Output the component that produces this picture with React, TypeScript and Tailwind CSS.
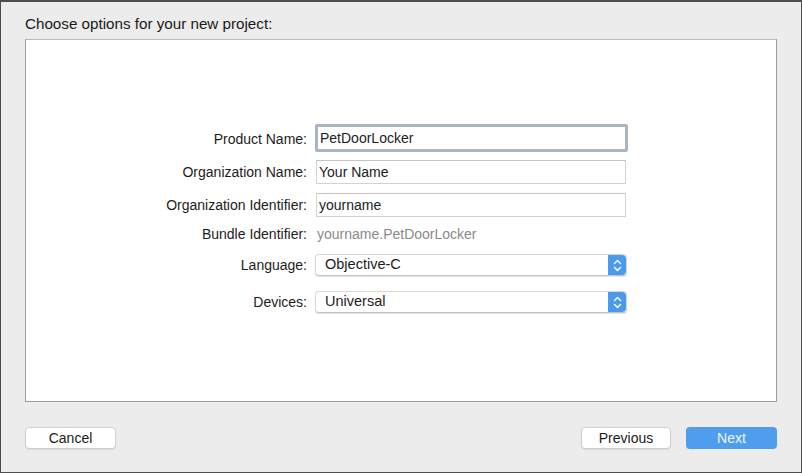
import React from 'react';

const font = { fontFamily: '"Liberation Sans", Arial, sans-serif' };

function Label({ children }: { children: React.ReactNode }) {
  return <div className="text-right text-[14px] leading-[16px] text-[#1c1c1c]">{children}</div>;
}

function Stepper() {
  return (
    <div className="flex h-full w-[18px] flex-col items-center justify-center gap-[1px] rounded-r-[4px] bg-[#4c9bea]">
      <svg width="9" height="6" viewBox="0 0 9 6" fill="none">
        <path d="M1.5 4.5 L4.5 1.5 L7.5 4.5" stroke="#fff" strokeWidth="1.4" strokeLinecap="round" strokeLinejoin="round" />
      </svg>
      <svg width="9" height="6" viewBox="0 0 9 6" fill="none">
        <path d="M1.5 1.5 L4.5 4.5 L7.5 1.5" stroke="#fff" strokeWidth="1.4" strokeLinecap="round" strokeLinejoin="round" />
      </svg>
    </div>
  );
}

function Popup({ value }: { value: string }) {
  return (
    <div className="flex h-[22px] w-[312px] items-stretch rounded-[4px] border border-[#d6d6d6] border-b-[#c2c2c2] bg-white shadow-[0_1px_1px_rgba(0,0,0,0.12)]">
      <div className="flex flex-1 items-center pl-[9px] text-[14.5px] text-[#1c1c1c]">{value}</div>
      <Stepper />
    </div>
  );
}

function TextField({ value }: { value: string }) {
  return (
    <div className="flex h-[24px] w-[310px] items-center border border-[#d2d2d2] border-t-[#c4c4c4] bg-white pl-[2px] text-[14px] text-[#1c1c1c]">
      {value}
    </div>
  );
}

export default function App() {
  return (
    <div
      style={font}
      className="flex h-[473px] w-[802px] flex-col border border-t-2 border-[#4d4d4d] bg-[#ececec]"
    >
      {/* Title */}
      <div className="h-[37px] pl-6 pt-[13px] text-[15.2px] leading-[17px] text-[#1a1a1a]">
        Choose options for your new project:
      </div>

      {/* Options panel */}
      <div className="mx-6 h-[363px] border border-[#9c9c9c] border-t-[#b4bcc5] bg-white pt-[84px]">
        <div className="grid grid-cols-[281px_auto] items-center gap-x-2">
          <div className="h-[28px] content-center pt-[1px]">
            <Label>Product Name:</Label>
          </div>
          <div className="flex h-[28px] w-[313px] items-center rounded-[2px] border-[3px] border-[#a9b5c2] bg-white pl-[2px] text-[14px] text-[#1c1c1c]">
            PetDoorLocker
          </div>

          <div className="mt-2"><Label>Organization Name:</Label></div>
          <div className="mt-2 pl-[1px]"><TextField value="Your Name" /></div>

          <div className="mt-[9px]"><Label>Organization Identifier:</Label></div>
          <div className="mt-[9px] pl-[1px]"><TextField value="yourname" /></div>

          <div className="mt-[7px] h-[20px] content-center"><Label>Bundle Identifier:</Label></div>
          <div className="mt-[7px] flex h-[20px] items-center pl-[2px] text-[14px] text-[#8a8a8a]">
            yourname.PetDoorLocker
          </div>

          <div className="mt-[10px]"><Label>Language:</Label></div>
          <div className="mt-[10px]"><Popup value="Objective-C" /></div>

          <div className="mt-[15px]"><Label>Devices:</Label></div>
          <div className="mt-[15px]"><Popup value="Universal" /></div>
        </div>
      </div>

      {/* Buttons */}
      <div className="flex items-center px-6 pt-[25px]">
        <button className="h-[22px] w-[91px] rounded-[4px] border border-[#cfcfcf] bg-white text-[14px] text-[#1a1a1a] shadow-[0_1px_1px_rgba(0,0,0,0.08)]">
          Cancel
        </button>
        <div className="flex-1" />
        <button className="h-[22px] w-[90px] rounded-[4px] border border-[#cfcfcf] bg-white text-[14px] text-[#1a1a1a] shadow-[0_1px_1px_rgba(0,0,0,0.08)]">
          Previous
        </button>
        <button className="ml-[15px] h-[22px] w-[91px] rounded-[4px] bg-[#4f9ded] text-[14px] text-[#eef5fd]">
          Next
        </button>
      </div>
    </div>
  );
}
